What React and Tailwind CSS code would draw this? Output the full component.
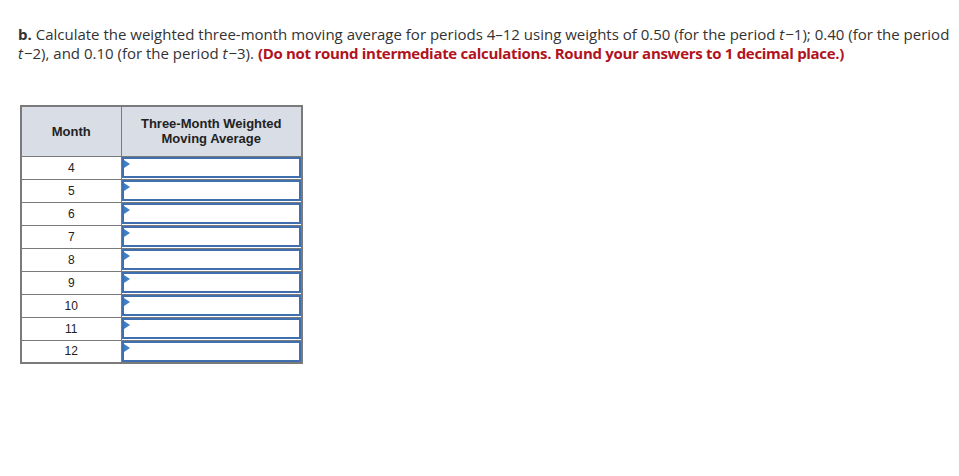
import React from "react";

const months = [4, 5, 6, 7, 8, 9, 10, 11, 12];

function Row({ m }) {
  return (
    <tr className="h-[23px]">
      <td className="border border-[#7a7a7a] text-center text-[12px] text-[#222] p-0 align-middle">{m}</td>
      <td className="border border-[#7a7a7a] p-0 align-top">
        <div className="relative h-[21px] border-2 border-[#3f6fae] bg-white">
          <span className="absolute left-0 top-[1px] w-0 h-0 border-t-[4px] border-b-[4px] border-l-[6px] border-t-transparent border-b-transparent border-l-[#3f7fc8]" />
        </div>
      </td>
    </tr>
  );
}

function T() {
  return <i className="pr-[1px]">t</i>;
}

export default function App() {
  return (
    <div className="bg-white w-[959px] h-[476px] overflow-hidden">
      <div className="pt-[25px] pl-[18px] pr-[6px] text-[15px] leading-[19px] text-[#333]" style={{ fontFamily: "'Open Sans', sans-serif" }}>
        <p>
          <b className="font-bold">b.</b> Calculate the weighted three-month moving average for periods 4–12 using weights of 0.50 (for the period <T />−1); 0.40 (for the period <T />−2), and 0.10 (for the period <T />−3).{" "}
          <b className="font-bold tracking-[-0.3px] text-[#b0131d]">(Do not round intermediate calculations. Round your answers to 1 decimal place.)</b>
        </p>
      </div>
      <div className="pl-[20px] pt-[42px]" style={{ fontFamily: "'Liberation Sans', Arial, sans-serif" }}>
        <table className="border-collapse border-2 border-[#7a7a7a]">
          <thead>
            <tr className="h-[50px] bg-[#d9dde6]">
              <th className="w-[100px] border border-[#7a7a7a] text-[13px] font-bold text-[#222] text-center align-middle">Month</th>
              <th className="w-[181px] border border-[#7a7a7a] text-[13px] font-bold text-[#222] text-center align-middle leading-[15px]">
                Three-Month Weighted
                <br />
                Moving Average
              </th>
            </tr>
          </thead>
          <tbody>
            {months.map((m) => (
              <Row key={m} m={m} />
            ))}
          </tbody>
        </table>
      </div>
    </div>
  );
}
